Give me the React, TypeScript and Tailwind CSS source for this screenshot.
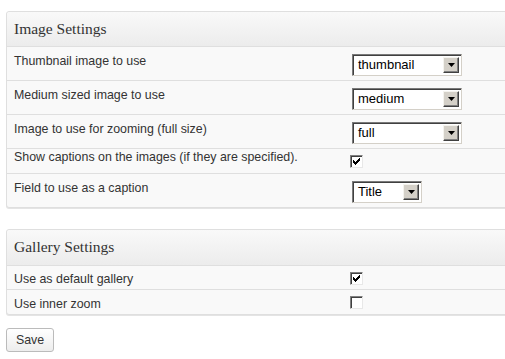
import React from "react";

const Arrow = () => (
  <span className="absolute right-[2px] top-[2px] bottom-[2px] w-[16px] bg-[#d4d0c8] border border-t-[#f4f3ee] border-l-[#f4f3ee] border-r-[#404040] border-b-[#404040] flex items-center justify-center shadow-[inset_-1px_-1px_0_#808080]">
    <svg width="7" height="4" viewBox="0 0 7 4">
      <path d="M0 0h7L3.5 4z" fill="#000" />
    </svg>
  </span>
);

const Select = ({ value, w }: { value: string; w: string }) => (
  <div
    className={`relative h-[22px] ${w} bg-white border border-t-[#7a7a7a] border-l-[#7a7a7a] border-r-[#d4d0c8] border-b-[#d4d0c8] shadow-[inset_1px_1px_0_#404040] text-[13px] text-black leading-[20px] pl-[5px]`}
  >
    {value}
    <Arrow />
  </div>
);

const Checkbox = ({ checked }: { checked?: boolean }) => (
  <div className="-ml-[2px] w-[13px] h-[13px] bg-white border border-t-[#808080] border-l-[#808080] border-r-[#e8e8e8] border-b-[#e8e8e8] shadow-[inset_1px_1px_0_#404040] flex items-center justify-center">
    {checked && (
      <svg width="9" height="9" viewBox="0 0 9 9" shapeRendering="crispEdges">
        <path d="M1 3h1v1h1v1h1V4h1V3h1V2h1V1h1v3H7v1H6v1H5v1H4v1H3V7H2V6H1z" fill="#000" />
      </svg>
    )}
  </div>
);

const Row = ({
  label,
  children,
  h,
  lpt,
  cpt,
  last,
}: {
  label: string;
  children: React.ReactNode;
  h: string;
  lpt: string;
  cpt: string;
  last?: boolean;
}) => (
  <div className={`flex ${h} ${last ? "" : "border-b border-[#dfdfdf]"}`}>
    <div className={`w-[345px] pl-[7px] ${lpt} leading-[16px]`}>{label}</div>
    <div className={`${cpt}`}>{children}</div>
  </div>
);

const Panel = ({
  title,
  children,
  hh,
}: {
  title: string;
  children: React.ReactNode;
  hh: string;
}) => (
  <div className="w-[540px] border border-[#dfdfdf] rounded-[3px] bg-[#f9f9f9] shadow-[0_1px_0_#e4e4e4]">
    <div
      className={`${hh} border-b border-[#dfdfdf] bg-gradient-to-b from-[#f9f9f9] to-[#ececec] rounded-t-[3px] pl-[7px] pt-[9px] text-[15.5px] leading-[16px] text-[#333] [font-family:'Liberation_Serif',serif]`}
    >
      {title}
    </div>
    {children}
  </div>
);

export default function App() {
  return (
    <div className="w-[505px] h-[359px] overflow-hidden bg-white text-[12.4px] text-[#333] [font-family:'Liberation_Sans',Arial,sans-serif]">
      <div className="pl-[6px] pt-[11px]">
        <Panel title="Image Settings" hh="h-[35px]">
          <Row label="Thumbnail image to use" h="h-[34px]" lpt="pt-[6px]" cpt="pt-[7px]">
            <Select value="thumbnail" w="w-[110px]" />
          </Row>
          <Row label="Medium sized image to use" h="h-[34px]" lpt="pt-[6px]" cpt="pt-[7px]">
            <Select value="medium" w="w-[110px]" />
          </Row>
          <Row label="Image to use for zooming (full size)" h="h-[34px]" lpt="pt-[6px]" cpt="pt-[7px]">
            <Select value="full" w="w-[110px]" />
          </Row>
          <Row label="Show captions on the images (if they are specified)." h="h-[25px]" lpt="pt-[0px]" cpt="pt-[6px]">
            <Checkbox checked />
          </Row>
          <Row label="Field to use as a caption" h="h-[33px]" lpt="pt-[6px]" cpt="pt-[7px]" last>
            <Select value="Title" w="w-[70px]" />
          </Row>
        </Panel>
        <div className="h-[21px]" />
        <Panel title="Gallery Settings" hh="h-[36px]">
          <Row label="Use as default gallery" h="h-[24px]" lpt="pt-[5px]" cpt="pt-[6px]">
            <Checkbox checked />
          </Row>
          <Row label="Use inner zoom" h="h-[24px]" lpt="pt-[6px]" cpt="pt-[6px]" last>
            <Checkbox />
          </Row>
        </Panel>
        <button className="mt-[13px] w-[48px] h-[24px] rounded-[3px] border border-[#bbbbbb] bg-gradient-to-b from-white to-[#ededed] text-[12.4px] text-[#333] leading-[22px]">
          Save
        </button>
      </div>
    </div>
  );
}
